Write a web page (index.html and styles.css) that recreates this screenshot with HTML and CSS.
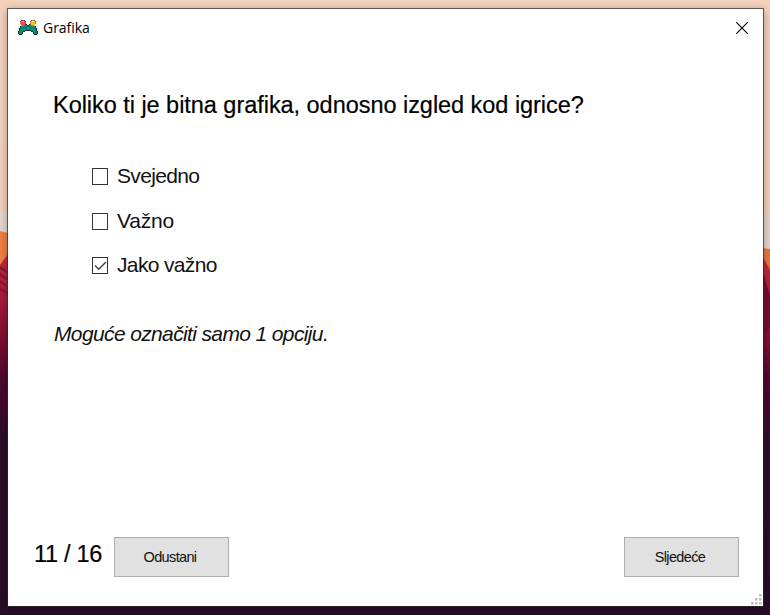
FILE: index.html
```html
<!DOCTYPE html>
<html lang="hr">
<head>
<meta charset="utf-8">
<title>Grafika</title>
<link rel="stylesheet" href="styles.css">
</head>
<body>
<svg class="wallpaper" viewBox="0 0 770 615" aria-hidden="true">
  <defs>
    <linearGradient id="sky" x2="0" y2="1"><stop offset="0" stop-color="#f5d2bd"/><stop offset="1" stop-color="#f3cfb8"/></linearGradient>
    <linearGradient id="hill" x2="0" y2="1"><stop offset="0" stop-color="#c52d3f"/><stop offset=".13" stop-color="#a51b3a"/><stop offset=".26" stop-color="#760b32"/><stop offset=".34" stop-color="#500830"/><stop offset=".42" stop-color="#43082e"/><stop offset=".52" stop-color="#2b1029"/><stop offset="1" stop-color="#280d26"/></linearGradient>
  </defs>
  <path fill="url(#sky)" d="M0 0h770v615H0z"/>
  <path fill="#e7d7ce" d="M0 212h8v25H0zM763 214h7v38h-7z"/>
  <path fill="#ef8147" d="M0 231l8 2v40H0z"/>
  <path fill="#e8783f" d="M763 248l7 1v30h-7z"/>
  <path fill="url(#hill)" d="M0 265l8-11v361H0z"/>
  <path fill="#8c1232" d="M0 266l7 5v2l-7-4zM0 273l7 5v2l-7-4zM0 280l7 5v2l-7-4zM0 287l7 5v2l-7-4z"/>
  <path fill="url(#hill)" d="M763 257l7 13v345h-7z"/>
  <path fill="#770c30" d="M763 273l7 22v30l-7 20z"/>
  <path fill="#280d26" d="M0 603h770v12H0z"/>
</svg>
<main class="window">
  <header class="titlebar">
    <svg class="app-icon" viewBox="0 0 20 16" aria-hidden="true">
      <path fill="#118778" d="M4 5h12l2 3 1 3v3h-3l-2-3H6l-2 3H1v-3l1-3z"/>
      <path fill="#07312e" d="M7 4h2v1H7zM11 4h2v1h-2zM9 5h2v1H9zM2 6h1v2H2zM17 6h1v2h-1zM1 8h1v3H1zM18 8h1v3h-1zM0 11h1v3H0zM19 11h1v3h-1zM1 14h3v1H1zM16 14h3v1h-3zM4 12h1v2H4zM15 12h1v2h-1zM5 11h2v1H5zM13 11h2v1h-2zM7 10h6v1H7zM7 7h1v1H7zM12 7h1v1h-1z"/>
      <path fill="#222" d="M3 0h4v1H3zM13 0h4v1h-4zM2 1h1v1H2zM7 1h1v3H7zM12 1h1v3h-1zM17 1h1v3h-1z"/>
      <circle cx="5" cy="3" r="2.800" fill="#e85058"/><circle cx="15" cy="3" r="2.800" fill="#f8b923"/>
      <path fill="#ffeaa0" d="M14 1h2v1h-2z"/><path fill="#f59b9b" d="M4 1h2v1H4z"/>
    </svg>
    <h1 class="title">Grafika</h1>
    <svg class="close" viewBox="0 0 12 12" aria-label="Zatvori"><path d="M.3.3l11.400 11.400M11.700.3L.3 11.700"/></svg>
  </header>
  <section class="content">
    <h2 class="question">Koliko ti je bitna grafika, odnosno izgled kod igrice?</h2>
    <div class="options">
      <label class="option"><input type="checkbox"><span class="text">Svejedno</span></label>
      <label class="option"><input type="checkbox"><span class="text vazno">Važno</span></label>
      <label class="option"><input type="checkbox" checked><svg class="tick" viewBox="0 0 15 15" aria-hidden="true"><path d="M2 7.500l3.700 3.700L13 4"/></svg><span class="text">Jako važno</span></label>
    </div>
    <p class="hint">Moguće označiti samo 1 opciju.</p>
  </section>
  <footer class="footer">
    <span class="progress">11 / 16</span>
    <button class="cancel">Odustani</button>
    <button class="next">Sljedeće</button>
  </footer>
  <svg class="grip" viewBox="0 0 11 11" aria-hidden="true"><path d="M8 0h2.500v2.500H8zM4 4h2.500v2.500H4zM8 4h2.500v2.500H8zM0 8h2.500v2.500H0zM4 8h2.500v2.500H4zM8 8h2.500v2.500H8z"/></svg>
</main>
</body>
</html>
```

FILE: styles.css
```css
* { box-sizing: border-box; }
body {
  margin: 0;
  width: 770px;
  height: 615px;
  padding: 8px 6px 8px 7px;
  overflow: hidden;
  position: relative;
  font-family: "Liberation Sans", Arial, sans-serif;
  color: #000;
}
.wallpaper { position: absolute; inset: 0; width: 770px; height: 615px; }
.window {
  position: relative;
  display: flex;
  flex-direction: column;
  height: 599px;
  border: 1px solid rgba(45, 40, 42, .7);
  background: #fff;
  background-clip: padding-box;
  box-shadow: 0 2px 9px rgba(0, 0, 0, .3);
}
.titlebar { display: flex; align-items: center; height: 38px; padding: 0 15px 0 10px; }
.app-icon { width: 20px; height: 16px; margin-top: -1px; }
.title { margin: 0 auto 0 5px; font: 400 14px/20px "Open Sans", sans-serif; letter-spacing: -.05px; }
.close { width: 12px; height: 12px; fill: none; stroke: #000; stroke-width: 1.1; }
.content { padding: 44px 45px 0; flex: 1; }
.question { margin: 0; font-size: 23.500px; line-height: 28px; font-weight: 400; letter-spacing: -.04px; white-space: nowrap; -webkit-text-stroke: .2px #000; }
.options { display: grid; grid-template-rows: 45px 44px 44px; padding: 44px 0 0 39px; }
.option { position: relative; display: flex; align-items: flex-start; }
.option input { appearance: none; width: 16px; height: 17px; margin: 5px 9px 0 0; border: 1px solid #333; background: #fff; }
.tick { position: absolute; left: 1px; top: 6px; width: 15px; height: 15px; fill: none; stroke: #444; stroke-width: 1.4; }
.text { font-size: 21px; line-height: 26px; color: #111; letter-spacing: -.65px; }
.vazno { letter-spacing: -.2px; }
.hint { margin: 25px 0 0 1px; font-size: 21px; line-height: 26px; font-style: italic; color: #111; letter-spacing: -.63px; white-space: nowrap; }
.footer { display: flex; height: 40px; margin: 0 24px 29px 25px; }
.progress { width: 81px; padding: 3px 0 0 1px; font-size: 23.500px; line-height: 28px; letter-spacing: -.3px; white-space: nowrap; -webkit-text-stroke: .2px #000; }
button { width: 115px; height: 40px; padding: 0 3px 0 0; border: 1px solid #adadad; background: #e1e1e1; color: #111; font: 14.500px/20px "Liberation Sans", Arial, sans-serif; letter-spacing: -.65px; }
.next { margin-left: auto; }
.grip { position: absolute; right: 1px; bottom: 1px; width: 11px; height: 11px; fill: #bfbfbf; }
```
